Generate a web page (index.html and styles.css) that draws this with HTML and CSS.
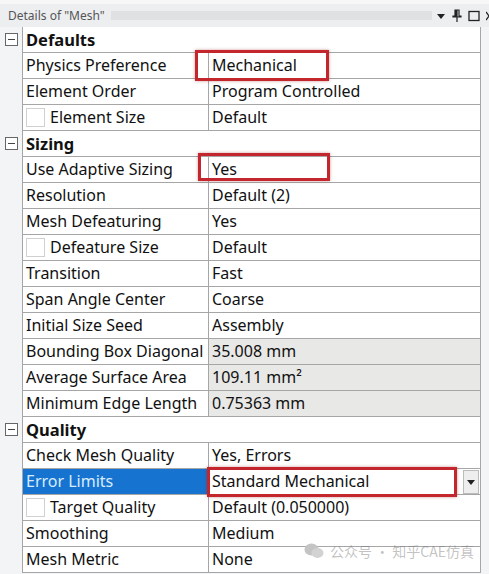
FILE: index.html
```html
<!DOCTYPE html>
<html lang="en">
<head>
    <meta charset="UTF-8">
    <title>Details of "Mesh"</title>
    <link rel="stylesheet" href="styles.css">
</head>
<body>

<div class="titlebar">
    <span class="title">Details of "Mesh"</span>
    <span class="dots"></span>
    <span class="tb-icons">
        <svg width="10" height="8" viewBox="0 0 10 8"><path d="M1 2h8L5 7z" fill="#222"/></svg>
        <svg width="10" height="14" viewBox="0 0 10 14"><path d="M3 1h4v6h2v1H1V7h2zM4 2v5h1V2zM5 8v5" stroke="#222" fill="none" stroke-width="1.2"/></svg>
        <svg width="12" height="12" viewBox="0 0 12 12"><rect x="1" y="1.5" width="10" height="9" fill="none" stroke="#222" stroke-width="1.3"/></svg>
        <svg width="3" height="12" viewBox="0 0 3 12"><path d="M0 2l6 8M6 2l-6 8" stroke="#222" stroke-width="1.3"/></svg>
    </span>
</div>

<div class="grid">
    <table class="props">
        <tr class="group"><td class="gutter"><span class="minus"></span></td><td colspan="2">Defaults</td></tr>
        <tr><td class="gutter"></td><td>Physics Preference</td><td>Mechanical</td></tr>
        <tr><td class="gutter"></td><td>Element Order</td><td>Program Controlled</td></tr>
        <tr><td class="gutter"></td><td><span class="chk"></span>Element Size</td><td>Default</td></tr>
        <tr class="group"><td class="gutter"><span class="minus"></span></td><td colspan="2">Sizing</td></tr>
        <tr><td class="gutter"></td><td>Use Adaptive Sizing</td><td>Yes</td></tr>
        <tr><td class="gutter"></td><td>Resolution</td><td>Default (2)</td></tr>
        <tr><td class="gutter"></td><td>Mesh Defeaturing</td><td>Yes</td></tr>
        <tr><td class="gutter"></td><td><span class="chk"></span>Defeature Size</td><td>Default</td></tr>
        <tr><td class="gutter"></td><td>Transition</td><td>Fast</td></tr>
        <tr><td class="gutter"></td><td>Span Angle Center</td><td>Coarse</td></tr>
        <tr><td class="gutter"></td><td>Initial Size Seed</td><td>Assembly</td></tr>
        <tr><td class="gutter"></td><td>Bounding Box Diagonal</td><td class="ro">35.008 mm</td></tr>
        <tr><td class="gutter"></td><td>Average Surface Area</td><td class="ro">109.11 mm²</td></tr>
        <tr><td class="gutter"></td><td>Minimum Edge Length</td><td class="ro">0.75363 mm</td></tr>
        <tr class="group"><td class="gutter"><span class="minus"></span></td><td colspan="2">Quality</td></tr>
        <tr><td class="gutter"></td><td>Check Mesh Quality</td><td>Yes, Errors</td></tr>
        <tr><td class="gutter"></td><td class="selected">Error Limits</td><td class="combo">Standard Mechanical<span class="drop"><svg width="8" height="5" viewBox="0 0 8 5"><path d="M0 0h8L4 5z" fill="#222"/></svg></span></td></tr>
        <tr><td class="gutter"></td><td><span class="chk"></span>Target Quality</td><td>Default (0.050000)</td></tr>
        <tr><td class="gutter"></td><td>Smoothing</td><td>Medium</td></tr>
        <tr><td class="gutter"></td><td>Mesh Metric</td><td>None</td></tr>
    </table>

    <div class="mark mark-1"></div>
    <div class="mark mark-2"></div>
    <div class="mark mark-3"></div>

    <div class="watermark">
        <svg width="20" height="16" viewBox="0 0 20 16"><ellipse cx="7.5" cy="6.5" rx="7" ry="6" fill="#c4c4c4"/><ellipse cx="13.5" cy="10" rx="6" ry="5" fill="#d2d2d2"/></svg>
        <span>公众号 · 知乎CAE仿真</span>
    </div>
</div>

</body>
</html>
```

FILE: styles.css
```css
body {
    margin: 0;
    background-color: #f3f4f6;
    font-family: "Noto Sans", "Open Sans", sans-serif;
    width: 489px;
    height: 574px;
    overflow: hidden;
}
.titlebar {
    height: 27px;
    box-sizing: border-box;
    border-top: 4px solid #f7f7f7;
    background-color: #eceef0;
    display: flex;
    align-items: center;
    padding-left: 8px;
    font-size: 12px;
    color: #555;
}
.title {
    white-space: nowrap;
}
.dots {
    flex: 1;
    height: 9px;
    margin: 0 4px 0 6px;
    background-image: radial-gradient(circle, #cfd0d2 0.6px, transparent 0.8px);
    background-size: 2px 2px;
}
.tb-icons {
    display: flex;
    align-items: center;
    gap: 6px;
}
.grid {
    position: relative;
}
.props {
    border-collapse: collapse;
    font-size: 16px;
    color: #111;
}
.props td {
    height: 25px;
    padding: 0 0 0 3px;
    border: 1px solid #a6a6a6;
    background-color: #fff;
    white-space: nowrap;
    line-height: 25px;
}
.props td:nth-child(2) {
    width: 182px;
}
.props td:nth-child(3) {
    width: 268px;
}
.props tr:first-child td {
    border-top: none;
}
.props td.gutter {
    width: 22px;
    padding: 0;
    border: none;
    background-color: #f3f4f6;
    vertical-align: middle;
}
.group td {
    font-weight: bold;
    font-size: 16.5px;
}
.minus {
    display: block;
    width: 11px;
    height: 11px;
    margin-left: 5px;
    border: 1px solid #666;
    background: linear-gradient(#444, #444) center / 7px 1px no-repeat, #fff;
}
.chk {
    display: inline-block;
    width: 17px;
    height: 17px;
    border: 1px solid #d0d0d0;
    vertical-align: -4px;
    margin-right: 5px;
}
.props td.ro {
    background-color: #e8e8e6;
}
.props td.selected {
    background-color: #1673cf;
    color: #d8ecff;
}
.props td.combo {
    position: relative;
}
.drop {
    position: absolute;
    right: 1px;
    top: 1px;
    width: 14px;
    height: 22px;
    background-color: #eee;
    border: 1px solid #bbb;
    display: flex;
    align-items: center;
    justify-content: center;
}
.mark {
    position: absolute;
    border: 3px solid #c4262e;
    box-shadow: 0 0 3px rgba(150, 30, 30, 0.45);
}
.mark-1 {
    left: 195px;
    top: 23px;
    width: 128px;
    height: 25px;
}
.mark-2 {
    left: 198px;
    top: 126px;
    width: 126px;
    height: 22px;
}
.mark-3 {
    left: 207px;
    top: 440px;
    width: 244px;
    height: 24px;
}
.watermark {
    position: absolute;
    left: 304px;
    top: 514px;
    display: flex;
    align-items: center;
    gap: 6px;
    font-size: 14px;
    white-space: nowrap;
    color: rgba(120, 120, 120, 0.45);
    font-family: "Noto Sans CJK SC", sans-serif;
}
```
